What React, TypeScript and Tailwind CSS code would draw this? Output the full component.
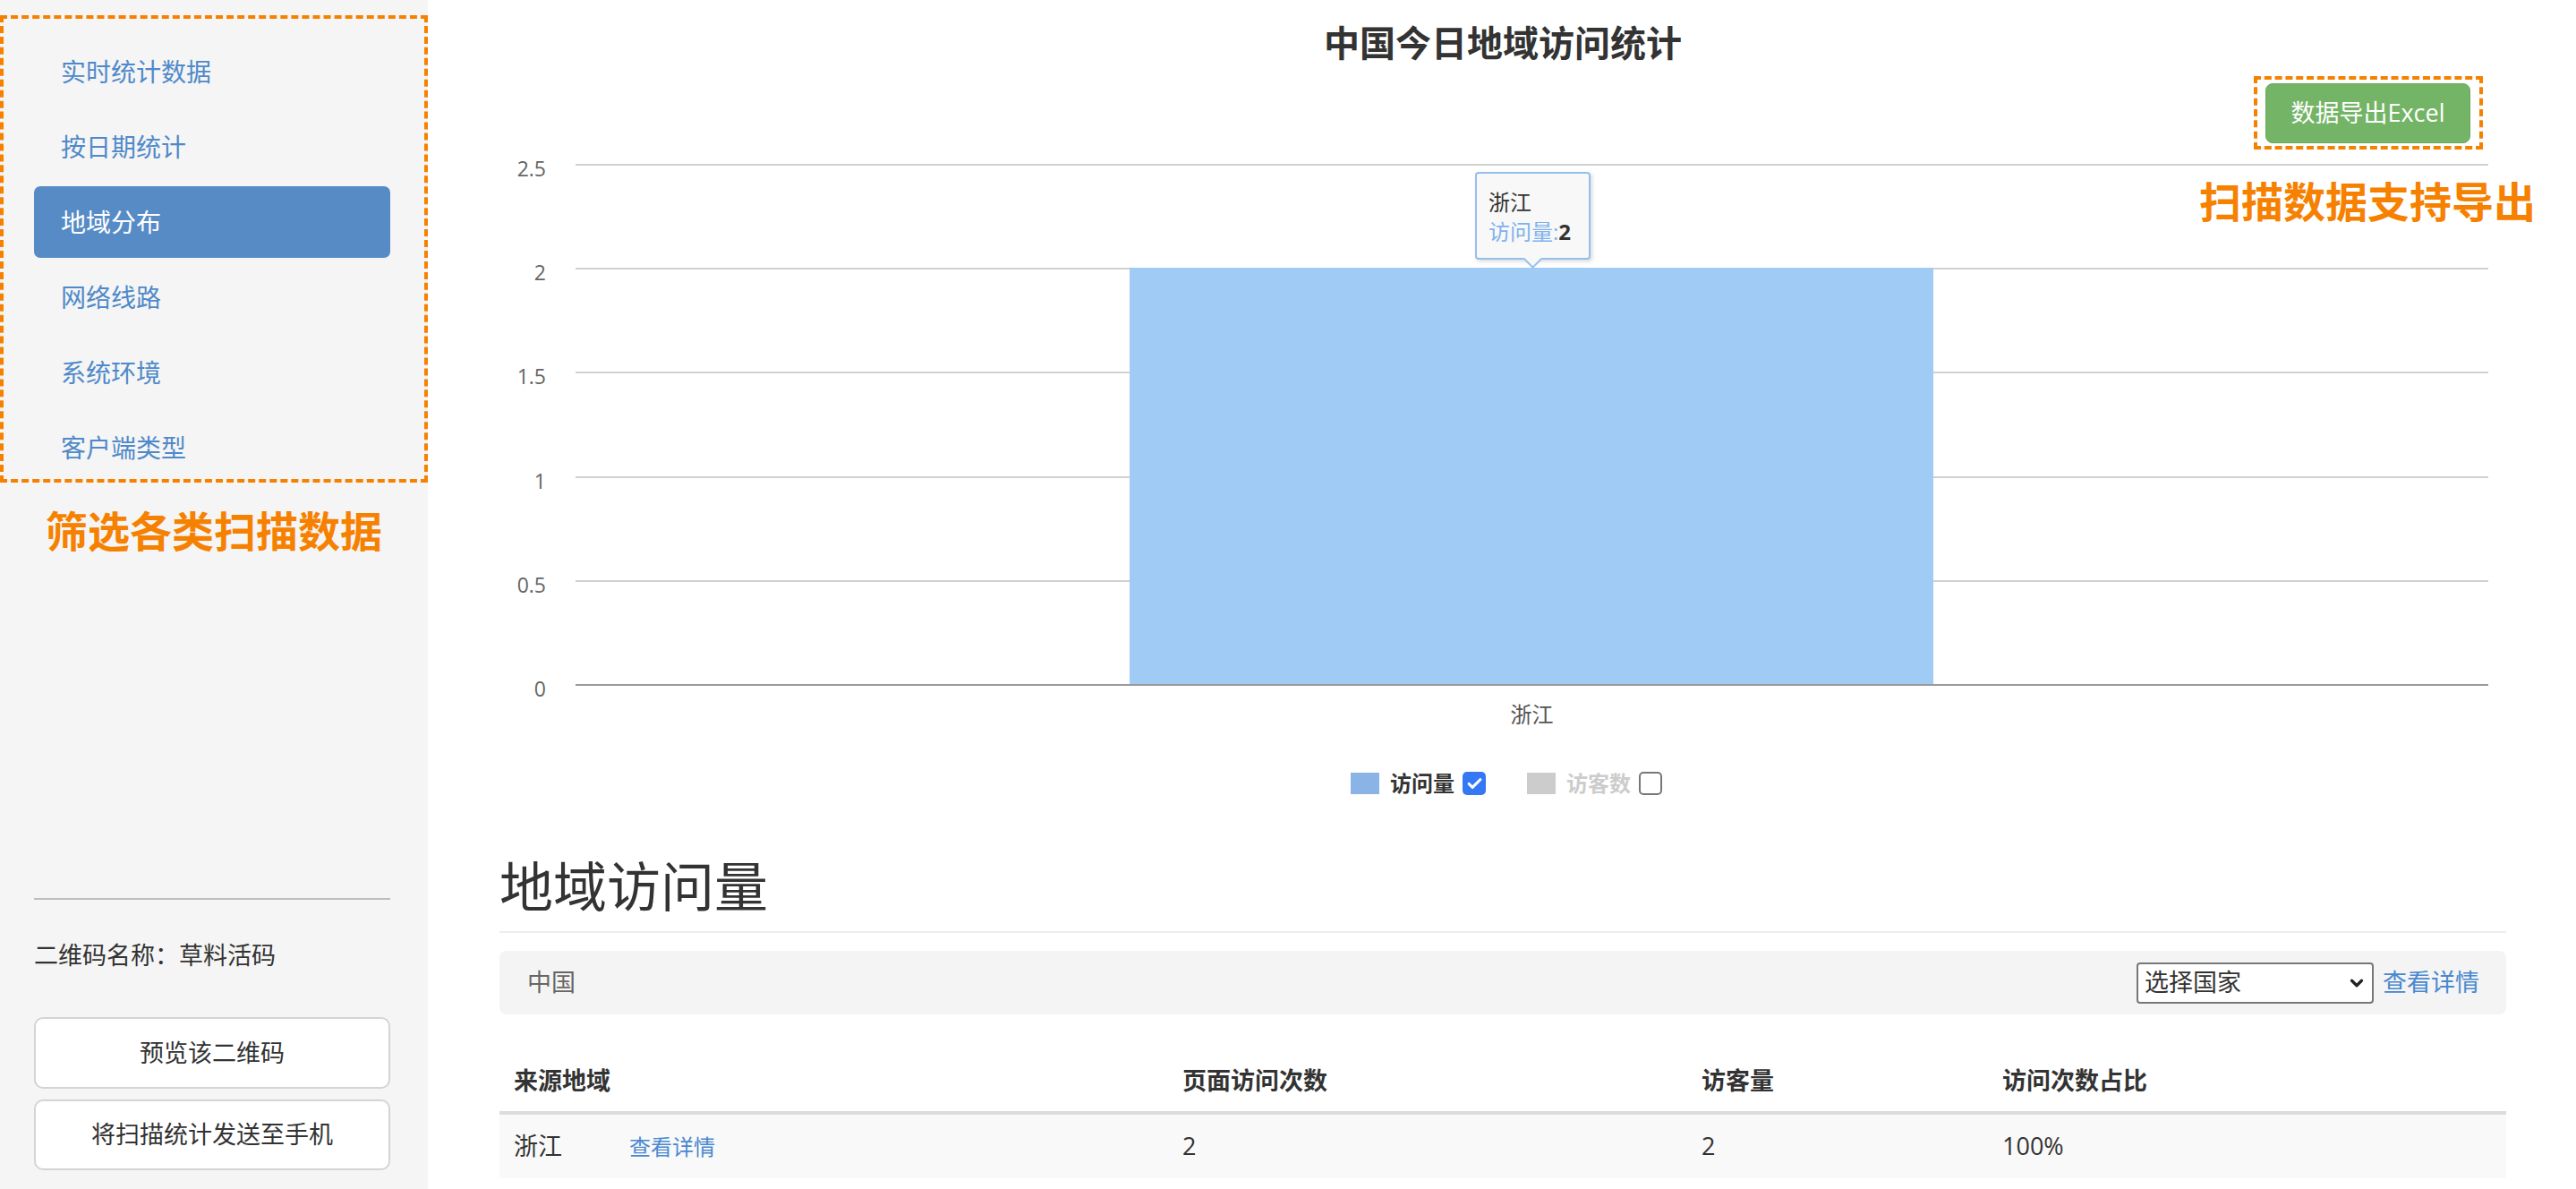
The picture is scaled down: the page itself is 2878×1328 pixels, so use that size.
import { ChevronDown, Check } from 'lucide-react';

const font = "font-['Open_Sans','Noto_Sans_CJK_SC',sans-serif]";

const navItems = ['实时统计数据', '按日期统计', '地域分布', '网络线路', '系统环境', '客户端类型'];
const yTicks = ['2.5', '2', '1.5', '1', '0.5', '0'];

const rows = [{ region: '浙江', pv: 2, uv: 2, share: '100%' }];

function Sidebar() {
  return (
    <aside className="w-[478px] shrink-0 h-screen bg-[#f5f5f5] flex flex-col">
      {/* nav, with the dashed callout round it */}
      <div className="mt-[17px] border-4 border-dashed border-[#f68100] pt-[19px]">
        <ul className="flex flex-col gap-[4px] pl-[34px] pr-[38px] -mb-[5px]">
          {navItems.map((item) => {
            const active = item === '地域分布';
            return (
              <li
                key={item}
                className={`h-[80px] flex items-center pl-[30px] rounded-[7px] text-[28px] ${
                  active ? 'bg-[#578bc6] text-white' : 'text-[#4f89c9]'
                }`}
              >
                {item}
              </li>
            );
          })}
        </ul>
      </div>
      <p className="mt-[26px] text-center text-[47px] leading-[56px] font-bold text-[#f68100]">筛选各类扫描数据</p>

      <div className="mt-auto pl-[38px] pr-[42px] pb-[21px]">
        <div className="border-t-2 border-[#bdbdbd]" />
        <p className="mt-[42px] text-[27px] leading-[40px] text-[#333]">二维码名称：草料活码</p>
        <button className="mt-[49px] w-full h-[80px] bg-white border-2 border-[#d4d4d4] rounded-[10px] text-[27px] text-[#333]">
          预览该二维码
        </button>
        <button className="mt-[12px] w-full h-[79px] bg-white border-2 border-[#d4d4d4] rounded-[10px] text-[27px] text-[#333]">
          将扫描统计发送至手机
        </button>
      </div>
    </aside>
  );
}

function Chart() {
  const max = 2.5;
  const value = 2;
  return (
    <div className="pt-[16px]">
      <div className="flex">
        {/* y axis labels + grid */}
        <div className="flex-1 flex flex-col justify-between h-[583px] relative">
          {yTicks.map((t, i) => (
            <div key={t} className="flex items-center h-[2px]">
              <span className="w-[52px] text-right text-[23px] leading-[30px] text-[#666] translate-y-[4px]">{t}</span>
              <div className={`ml-[33px] mr-[20px] flex-1 h-[2px] ${i === yTicks.length - 1 ? 'bg-[#999]' : 'bg-[#d0d0d0]'}`} />
            </div>
          ))}
          {/* bar */}
          <div
            className="absolute left-[704px] w-[898px] bottom-[2px] bg-[#a0cbf5]"
            style={{ height: `${(value / max) * 581}px` }}
          />
          {/* tooltip */}
          <div className="absolute left-[1090px] top-[9px] w-[129px] h-[98px] bg-[#f8f8f8] border-2 border-[#95bfeb] rounded-[4px] shadow-[2px_2px_4px_rgba(0,0,0,0.15)] pl-[13px] pt-[15px] text-[24px] leading-[33px]">
            <div className="text-[#333]">浙江</div>
            <div>
              <span className="text-[#7fb2ec]">访问量:</span>
              <span className="font-bold text-[#333]">2</span>
            </div>
            <div className="absolute left-[55px] -bottom-[9px] w-[15px] h-[15px] rotate-45 bg-[#f8f8f8] border-r-2 border-b-2 border-[#95bfeb]" />
          </div>
        </div>
      </div>
      <div className="pl-[85px] pr-[20px] mt-[17px] text-center text-[24px] leading-[30px] text-[#555]">浙江</div>

      {/* legend */}
      <div className="mt-[49px] flex justify-center items-center h-[26px] text-[24px] font-bold pl-[8px]">
        <span className="w-[32px] h-[24px] bg-[#8ab4e6]" />
        <span className="ml-[12px] text-[#333]">访问量</span>
        <span className="ml-[9px] w-[26px] h-[26px] rounded-[5px] bg-[#3478f6] flex items-center justify-center">
          <Check className="size-[19px] text-white" strokeWidth={4} />
        </span>
        <span className="ml-[46px] w-[32px] h-[24px] bg-[#cccccc]" />
        <span className="ml-[12px] text-[#cccccc]">访客数</span>
        <span className="ml-[9px] w-[26px] h-[26px] rounded-[5px] border-2 border-[#777] bg-white" />
      </div>
    </div>
  );
}

export default function App() {
  return (
    <div className={`flex w-full h-screen bg-white text-[#333] overflow-hidden ${font}`}>
      <Sidebar />

      <main className="relative flex-1 pl-[80px] pr-[78px]">
        <h1 className="pt-[23px] text-center text-[40px] leading-[50px] font-bold text-[#333]">中国今日地域访问统计</h1>

        <div className="mt-[12px] flex justify-end mr-[26px]">
          <div className="border-4 border-dashed border-[#f68100] pt-[4px] pb-[3px] pl-[9px] pr-[10px]">
            <button className="w-[229px] h-[67px] rounded-[8px] bg-[#73b466] border border-[#69a95c] text-white text-[27px]">
              数据导出Excel
            </button>
          </div>
        </div>

        <p className="absolute right-[45px] top-[197px] text-[47px] leading-[56px] font-bold text-[#f68100]">扫描数据支持导出</p>

        <Chart />

        <h2 className="mt-[67px] pb-[15px] text-[60px] leading-[70px] font-normal text-[#333] border-b-2 border-[#eeeeee]">
          地域访问量
        </h2>

        <div className="mt-[20px] h-[71px] rounded-[8px] bg-[#f4f4f4] flex items-center pl-[31px] pr-[30px]">
          <span className="text-[27px] text-[#666]">中国</span>
          <div className="ml-auto w-[265px] h-[46px] bg-white border-2 border-[#777] rounded-[4px] flex items-center pl-[7px] pr-[6px] text-[27px] text-[#333]">
            <span>选择国家</span>
            <ChevronDown className="ml-auto size-[22px] text-[#222]" strokeWidth={3.5} />
          </div>
          <a className="ml-[10px] text-[27px] text-[#4a88cf]">查看详情</a>
        </div>

        <div className="mt-[40px] text-[27px]">
          <div className="grid grid-cols-[747px_580px_336px_1fr] h-[72px] items-center font-bold text-[#333] border-b-4 border-[#dddddd]">
            <div className="pl-[16px]">来源地域</div>
            <div className="pl-[16px]">页面访问次数</div>
            <div className="pl-[16px]">访客量</div>
            <div className="pl-[16px]">访问次数占比</div>
          </div>
          {rows.map((r) => (
            <div key={r.region} className="grid grid-cols-[747px_580px_336px_1fr] h-[71px] items-center bg-[#f9f9f9] text-[#333]">
              <div className="pl-[16px] flex items-center">
                <span>{r.region}</span>
                <a className="ml-[75px] text-[24px] text-[#4a88cf]">查看详情</a>
              </div>
              <div className="pl-[16px]">{r.pv}</div>
              <div className="pl-[16px]">{r.uv}</div>
              <div className="pl-[16px]">{r.share}</div>
            </div>
          ))}
        </div>
      </main>
    </div>
  );
}
